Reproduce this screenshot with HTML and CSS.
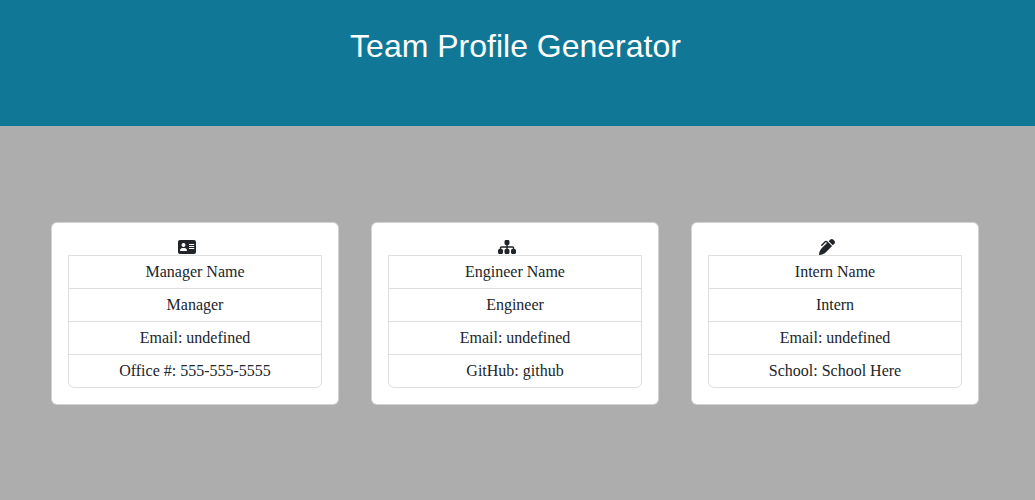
FILE: index.html
```html
<!DOCTYPE html>
<html lang="en">
<head>
<meta charset="utf-8">
<title>Team Profile Generator</title>
<link rel="stylesheet" href="styles.css">
</head>
<body>
<header class="banner"><h1 class="title">Team Profile Generator</h1></header>
<main class="team">
  <section class="card">
    <div class="icon-row"><svg class="icon" width="18" height="16" viewBox="0 0 576 512"><path fill-rule="evenodd" d="M64 32C28.700 32 0 60.700 0 96V416c0 35.300 28.700 64 64 64H512c35.300 0 64-28.700 64-64V96c0-35.300-28.700-64-64-64H64zm80 256h64c44.200 0 80 35.800 80 80c0 8.800-7.200 16-16 16H80c-8.800 0-16-7.200-16-16c0-44.200 35.800-80 80-80zm-32-96a64 64 0 1 1 128 0 64 64 0 1 1 -128 0zm240-32H520V192H352zm0 64H520V256H352zm0 64H520V320H352z"/></svg></div>
    <ul class="details">
      <li class="detail">Manager Name</li>
      <li class="detail">Manager</li>
      <li class="detail">Email: undefined</li>
      <li class="detail">Office #: 555-555-5555</li>
    </ul>
  </section>
  <section class="card">
    <div class="icon-row"><svg class="icon" width="18" height="16" viewBox="0 0 576 512"><path d="M208 80c0-26.500 21.500-48 48-48h64c26.500 0 48 21.500 48 48v64c0 26.500-21.500 48-48 48h-8v40H464c30.900 0 56 25.100 56 56v32h8c26.500 0 48 21.500 48 48v64c0 26.500-21.500 48-48 48H464c-26.500 0-48-21.500-48-48V368c0-26.500 21.500-48 48-48h8V288c0-4.400-3.600-8-8-8H312v40h8c26.500 0 48 21.500 48 48v64c0 26.500-21.500 48-48 48H256c-26.500 0-48-21.500-48-48V368c0-26.500 21.500-48 48-48h8V280H112c-4.400 0-8 3.600-8 8v32h8c26.500 0 48 21.500 48 48v64c0 26.500-21.500 48-48 48H48c-26.500 0-48-21.500-48-48V368c0-26.500 21.500-48 48-48h8V288c0-30.900 25.100-56 56-56H264V192h-8c-26.500 0-48-21.500-48-48V80z"/></svg></div>
    <ul class="details">
      <li class="detail">Engineer Name</li>
      <li class="detail">Engineer</li>
      <li class="detail">Email: undefined</li>
      <li class="detail">GitHub: github</li>
    </ul>
  </section>
  <section class="card">
    <div class="icon-row"><svg class="icon" width="16" height="16" viewBox="0 0 512 512"><path d="M453.300 19.300l39.400 39.400c25 25 25 65.500 0 90.500l-52.100 52.100-130-130 52.200-52c25-25 65.500-25 90.500 0zM241 114.900c-9.400-9.400-24.600-9.400-33.900 0L105 217c-9.400 9.400-24.600 9.400-33.900 0s-9.400-24.600 0-33.900L173.100 81c28.100-28.100 73.700-28.100 101.800 0L288 94.100l130 130L229.500 412.500c-48 48-109.200 80.200-175.800 93.500l-25 5c-7.900 1.600-16-.900-21.700-6.600s-8.100-13.800-6.500-21.700l5-25c13.300-66.600 45.800-127.800 93.800-175.800L254.100 128z"/></svg></div>
    <ul class="details">
      <li class="detail">Intern Name</li>
      <li class="detail">Intern</li>
      <li class="detail">Email: undefined</li>
      <li class="detail">School: School Here</li>
    </ul>
  </section>
</main>
</body>
</html>
```
FILE: styles.css
```css
* { box-sizing: border-box; }
body {
  margin: 0;
  min-height: 100vh;
  background: #adadad;
  color: #212529;
  font: 16px/24px "Liberation Serif", "Times New Roman", serif;
}
.banner {
  height: 126px;
  padding: 27px 4px 0 0;
  background: #117797;
  color: #fff;
  text-align: center;
}
.title {
  margin: 0;
  font: 400 32px/38px "Liberation Sans", Arial, sans-serif;
}
.team {
  display: flex;
  justify-content: center;
  gap: 32px;
  padding: 96px 5px 0 0;
}
.card {
  width: 288px;
  padding: 16px;
  background: #fff;
  border: 1px solid rgba(0, 0, 0, .176);
  border-radius: 6px;
}
.icon-row {
  display: flex;
  justify-content: center;
  height: 16px;
  padding-right: 16px;
}
.icon {
  display: block;
  fill: currentColor;
}
.details {
  margin: 0;
  padding: 0;
  list-style: none;
  border: 1px solid #dedfdf;
  border-radius: 0 0 6px 6px;
}
.detail {
  height: 33px;
  padding: 4px 16px;
  border-bottom: 1px solid #dedfdf;
  text-align: center;
}
.detail:last-child {
  height: 32px;
  border-bottom: 0;
}
```
